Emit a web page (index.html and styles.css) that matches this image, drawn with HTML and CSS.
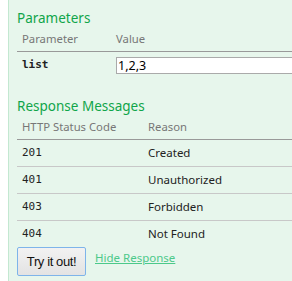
FILE: index.html
```html
<!DOCTYPE html>
<html>
<head>
<meta charset="utf-8">
<link rel="stylesheet" href="styles.css">
</head>
<body>
<div class="op">
  <h4 class="sec">Parameters</h4>
  <table class="tbl params">
    <thead><tr><th class="c1">Parameter</th><th>Value</th></tr></thead>
    <tbody>
      <tr><td class="c1 code bold">list</td><td class="valcell"><input class="val" type="text" value="1,2,3"></td></tr>
    </tbody>
  </table>
  <h4 class="sec resp">Response Messages</h4>
  <table class="tbl codes">
    <thead><tr><th class="c1">HTTP Status Code</th><th>Reason</th></tr></thead>
    <tbody>
      <tr><td class="c1 code">201</td><td>Created</td></tr>
      <tr><td class="c1 code">401</td><td>Unauthorized</td></tr>
      <tr><td class="c1 code">403</td><td>Forbidden</td></tr>
      <tr><td class="c1 code">404</td><td>Not Found</td></tr>
    </tbody>
  </table>
  <div class="actions">
    <button class="try" type="button">Try it out!</button>
    <a class="hide" href="#">Hide Response</a>
  </div>
</div>
</body>
</html>
```
FILE: styles.css
```css
html, body {
  margin: 0;
  padding: 0;
  background: #ffffff;
  overflow: hidden;
}
body {
  font-family: "Noto Sans", "Open Sans", sans-serif;
  font-size: 11.5px;
  color: #333;
}
.op {
  margin-left: 8px;
  width: 284px;
  height: 281px;
  overflow: hidden;
  border-left: 1px solid #c3e8d1;
  background: #e7f6ec;
  padding-left: 8px;
  box-sizing: border-box;
}
.sec {
  margin: 0;
  padding-top: 9px;
  font-size: 13.5px;
  line-height: 18px;
  font-weight: normal;
  color: #10a54a;
}
.sec.resp {
  padding-top: 19px;
}
.tbl {
  width: 400px;
  table-layout: fixed;
  border-collapse: collapse;
  border-spacing: 0;
}
.tbl th {
  text-align: left;
  font-weight: normal;
  font-size: 11.3px;
  color: #777;
  padding: 4px 5px 5px 5px;
  line-height: 15px;
  border-bottom: 1px solid #999;
}
.params .c1 { width: 84px; }
.codes .c1 { width: 116px; }
.tbl td {
  padding: 5px 5px;
  line-height: 16px;
  vertical-align: top;
  color: #222;
}
.codes tbody tr + tr td {
  border-top: 1px solid #c8c8c8;
}
.code {
  font-family: "DejaVu Sans Mono", monospace;
  font-size: 11px;
  color: #000;
}
.bold { font-weight: bold; }
.params td { padding-bottom: 4px; }
.valcell { padding-left: 0 !important; }
.val {
  display: block;
  width: 300px;
  height: 17px;
  box-sizing: border-box;
  margin: 0 0 0 5px;
  border: 1px solid #aaa;
  background: #fff;
  padding: 0 1px;
  font-family: "Noto Sans", sans-serif;
  font-size: 12.5px;
  color: #000;
}
.actions {
  display: flex;
  align-items: flex-start;
  gap: 9px;
}
.try {
  width: 69px;
  height: 29px;
  margin: 0;
  border: 1px solid #7eb4ea;
  border-radius: 2px;
  background: linear-gradient(#f2f2f2, #e3e3e3);
  font-family: "Liberation Sans", Arial, sans-serif;
  font-size: 13px;
  letter-spacing: -0.4px;
  color: #111;
  padding: 0;
}
.hide {
  margin-top: 3px;
  font-size: 11.5px;
  color: #4cc98a;
  text-decoration: underline;
}
```
